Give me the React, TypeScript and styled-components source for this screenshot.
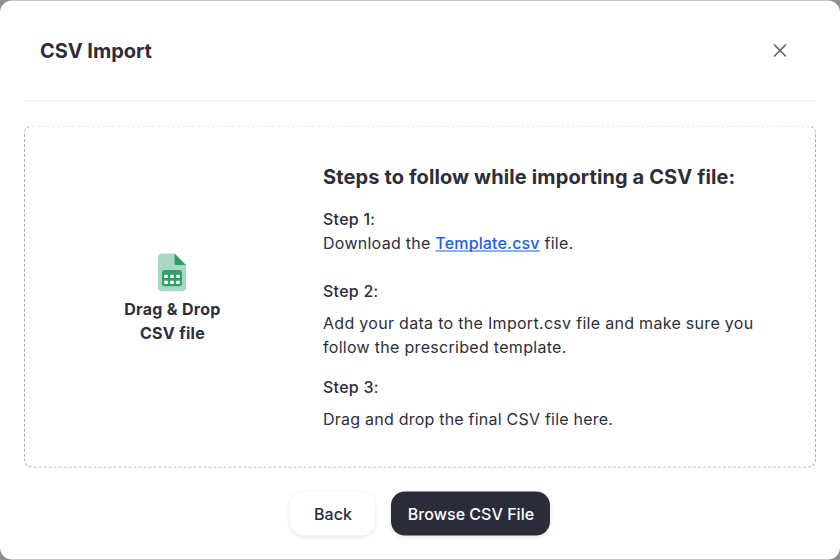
import React from "react";
import styled, { createGlobalStyle } from "styled-components";

const GlobalStyle = createGlobalStyle`
  * { box-sizing: border-box; }
  html, body { margin: 0; height: 100%; overflow: hidden; }
  body {
    background: #8f8f8f;
    font-family: Inter, "Liberation Sans", sans-serif;
    color: #2d2e3a;
    font-size: 16px;
    line-height: 24px;
    letter-spacing: 0.3px;
  }
`;

const Modal = styled.section`
  display: flex;
  flex-direction: column;
  width: 840px;
  height: 559px;
  padding: 0 24px 24px;
  background: #fff;
  border-radius: 12px;
  transform: translateY(0.5px);
`;

const Header = styled.header`
  display: flex;
  align-items: center;
  justify-content: space-between;
  height: 101px;
  padding: 0 24px 0 16px;
  border-bottom: 1px solid #e9e9ec;
`;

const Title = styled.h1`
  margin: 0;
  font-size: 20px;
  font-weight: 700;
  line-height: 28px;
  letter-spacing: -0.05px;
`;

const CloseButton = styled.button`
  display: flex;
  align-items: center;
  justify-content: center;
  width: 24px;
  height: 24px;
  padding: 0;
  border: 0;
  background: none;
  color: #65656b;
`;

const DropZone = styled.div`
  display: grid;
  grid-template-columns: 294px 1fr;
  height: 342px;
  margin-top: 24px;
  border: 1px dashed #a9a9bb;
  border-radius: 8px;
`;

const DropTarget = styled.div`
  display: flex;
  flex-direction: column;
  align-items: center;
  justify-content: center;
  font-weight: 700;
  letter-spacing: 0.3px;
  text-align: center;
`;

const DropLabel = styled.span`
  padding-left: 1px;
`;

const Steps = styled.div`
  padding: 36px 40px 0 4px;
`;

const StepsTitle = styled.h2`
  margin: 0 0 16px;
  font-size: 20px;
  font-weight: 700;
  line-height: 28px;
  letter-spacing: 0.12px;
`;

const Step = styled.div<{ $after?: number }>`
  margin-bottom: ${({ $after = 0 }) => $after}px;
`;

const StepName = styled.div`
  font-weight: 500;
  letter-spacing: 0.25px;
`;

const Colon = styled.span`
  font-weight: 400;
`;

const StepText = styled.p<{ $gap?: number; $tracking?: number }>`
  margin: ${({ $gap = 0 }) => $gap}px 0 0;
  letter-spacing: ${({ $tracking = 0.3 }) => $tracking}px;
`;

const TemplateLink = styled.a`
  color: #1d5ee2;
  letter-spacing: 0.16px;
  font-weight: 500;
  text-decoration: underline;
  text-decoration-thickness: 1px;
  text-underline-offset: 2px;
  text-decoration-skip-ink: none;
`;

const Footer = styled.footer`
  display: flex;
  justify-content: center;
  gap: 16px;
  margin-top: auto;
`;

const Button = styled.button<{ $primary?: boolean }>`
  width: ${({ $primary }) => ($primary ? 159 : 85)}px;
  height: 44px;
  padding: 0;
  border: 0;
  border-radius: 14px;
  background: ${({ $primary }) => ($primary ? "#2a2c3a" : "#fff")};
  color: ${({ $primary }) => ($primary ? "#fff" : "#2a2c3a")};
  box-shadow: 0 1.5px 4px rgba(40, 30, 50, 0.12);
  font: 500 16px/24px Inter, sans-serif;
  letter-spacing: 0.03px;
  text-indent: 1px;
  white-space: nowrap;
`;

const CloseIcon = () => (
  <svg width="24" height="24" viewBox="0 0 24 24" fill="none" stroke="currentColor" strokeWidth="1.75">
    <path d="M6 6l12 12M18 6L6 18" />
  </svg>
);

const SheetIcon = () => (
  <svg width="40" height="48" viewBox="0 0 40 48">
    <path d="M10 5h12.5L34 16.5V38.7a4 4 0 0 1-4 4H10a4 4 0 0 1-4-4V9a4 4 0 0 1 4-4Z" fill="#a9d8c2" />
    <path d="M22.5 5L34 16.5H24a1.5 1.5 0 0 1-1.5-1.5Z" fill="#2c9f6b" />
    <rect x="10" y="21.5" width="20" height="16.3" rx="3" fill="#2c9f6b" />
    <path d="M12.2 26.3h3.6v3.3h-3.6zM18.2 26.3h3.6v3.3h-3.6zM24.2 26.3h3.6v3.3h-3.6zM12.2 32.2h3.6v3.3h-3.6zM18.2 32.2h3.6v3.3h-3.6zM24.2 32.2h3.6v3.3h-3.6z" fill="#fff" />
  </svg>
);

export default function App() {
  return (
    <>
      <GlobalStyle />
      <Modal>
        <Header>
          <Title>CSV Import</Title>
          <CloseButton aria-label="Close"><CloseIcon /></CloseButton>
        </Header>
        <DropZone>
          <DropTarget>
            <SheetIcon />
            <DropLabel>Drag &amp; Drop<br />CSV file</DropLabel>
          </DropTarget>
          <Steps>
            <StepsTitle>Steps to follow while importing a CSV file:</StepsTitle>
            <Step $after={24}>
              <StepName>Step 1<Colon>:</Colon></StepName>
              <StepText $tracking={0.27}>Download the <TemplateLink>Template.csv</TemplateLink> file.</StepText>
            </Step>
            <Step $after={16}>
              <StepName>Step 2<Colon>:</Colon></StepName>
              <StepText $gap={8}>Add your data to the Import.csv file and make sure you follow the prescribed template.</StepText>
            </Step>
            <Step>
              <StepName>Step 3<Colon>:</Colon></StepName>
              <StepText $gap={8} $tracking={0.225}>Drag and drop the final CSV file here.</StepText>
            </Step>
          </Steps>
        </DropZone>
        <Footer>
          <Button>Back</Button>
          <Button $primary>Browse CSV File</Button>
        </Footer>
      </Modal>
    </>
  );
}
